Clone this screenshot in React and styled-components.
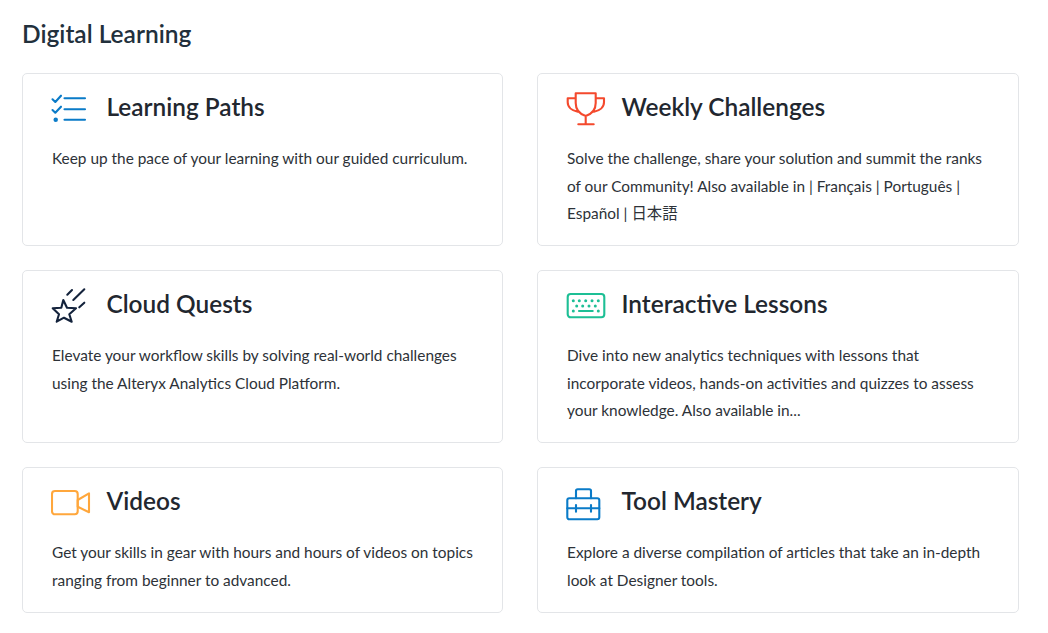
import React from 'react';
import styled, { createGlobalStyle } from 'styled-components';

const GlobalStyle = createGlobalStyle`
  html, body {
    margin: 0;
    padding: 0;
    background: #fff;
  }
  body {
    font-family: Lato, "Noto Sans CJK JP", sans-serif;
  }
`;

const Page = styled.main`
  padding: 16px 29px 20px 22px;
`;

const Heading = styled.h2`
  margin: 0 0 22px;
  font-size: 24.5px;
  line-height: 35px;
  font-weight: 600;
  color: #22303c;
`;

const Grid = styled.div`
  display: grid;
  grid-template-columns: 481px 482px;
  column-gap: 34px;
  row-gap: 24px;
`;

const Card = styled.article`
  border: 1px solid #e3e5e8;
  border-radius: 5px;
  padding: 15px 29px 17.5px;
`;

const CardHead = styled.div`
  display: flex;
  align-items: flex-start;
  gap: 15.5px;
  height: 40px;
  margin: 0 0 16px -1px;
`;

const IconSvg = styled.svg`
  width: 40px;
  height: 40px;
  flex: none;
  fill: none;
  stroke: ${p => p.$color};
  stroke-width: 2.1;
  stroke-linecap: round;
  stroke-linejoin: round;
`;

const KeyDot = styled.circle`
  fill: ${p => p.$color};
  stroke: none;
`;

const Title = styled.h3`
  margin: 0;
  font-size: 24.4px;
  line-height: 36px;
  font-weight: 600;
  color: #22272f;
`;

const Text = styled.p`
  margin: 0;
  font-size: 15.4px;
  line-height: 27.5px;
  color: #2d3238;
`;

const PathsIcon = () => (
  <IconSvg $color="#0a7bc8" viewBox="0 0 40 40">
    <path d="M1.500 10.300 4.300 13l5.700-6.300M1.500 21l2.800 2.700 5.700-6M13.500 9.300h20.500M13.500 20.300h20.500M13.500 30.700h20.500" />
    <circle cx="4.700" cy="30.700" r="1.200" />
  </IconSvg>
);

const TrophyIcon = () => (
  <IconSvg $color="#f4492d" viewBox="0 0 40 40">
    <path d="M9.700 4.200h20V14c0 6.500-4 11-10 13-6-2-10-6.500-10-13zM9.700 9.300H1.700v4c0 5 4.500 8.500 10 9.500M29.700 9.300h8.300v4c0 5-4.500 8.500-10 9.500M19.700 27v8.300M12.300 35.300h15.400" />
  </IconSvg>
);

const QuestsIcon = () => (
  <IconSvg $color="#14233c" viewBox="0 0 40 40">
    <path d="M12.300 14l3.700 7.700 9 .6-6.700 6 2.400 7.400-7.700-4-7.300 4 2.300-7.400-6.300-6 8.600-.6zM16.300 8.700 21 4M22.300 14 33.300 3.300M28.300 21.300l5-4.600" />
  </IconSvg>
);

const keyDots = [
  [7.3, 14.7], [13.3, 14.7], [19.7, 14.7], [26, 14.7], [32.3, 14.7],
  [10.7, 20], [16.7, 20], [23, 20], [29.3, 20],
  [7.3, 25], [32.3, 25],
];

const LessonsIcon = () => (
  <IconSvg $color="#1dbf95" viewBox="0 0 40 40">
    <rect x="1.700" y="8" width="36.600" height="23.300" rx="3" />
    {keyDots.map(([x, y]) => (
      <KeyDot key={`${x}-${y}`} $color="#1dbf95" cx={x} cy={y} r="1.500" />
    ))}
    <path d="M13 25h13.700" />
  </IconSvg>
);

const VideoIcon = () => (
  <IconSvg $color="#ffa73c" viewBox="0 0 40 40">
    <rect x="1" y="8" width="25.700" height="23.300" rx="3" />
    <path d="M26.700 17 38 10.300v19l-11.300-5.600z" />
  </IconSvg>
);

const ToolIcon = () => (
  <IconSvg $color="#0a7bc8" viewBox="0 0 40 40">
    <rect x="1.300" y="15.300" width="32" height="21" rx="2" />
    <path d="M10 15.300V8a1.700 1.700 0 0 1 1.700-1.700h11.600a1.700 1.700 0 0 1 1.700 1.700v7.300M1.300 25.300h32M10 22v6.700M25 22v6.700" />
  </IconSvg>
);

const cards = [
  {
    title: 'Learning Paths',
    icon: <PathsIcon />,
    text: 'Keep up the pace of your learning with our guided curriculum.',
  },
  {
    title: 'Weekly Challenges',
    icon: <TrophyIcon />,
    text: 'Solve the challenge, share your solution and summit the ranks of our Community! Also available in | Français | Português | Español | 日本語',
  },
  {
    title: 'Cloud Quests',
    icon: <QuestsIcon />,
    text: 'Elevate your workflow skills by solving real-world challenges using the Alteryx Analytics Cloud Platform.',
  },
  {
    title: 'Interactive Lessons',
    icon: <LessonsIcon />,
    text: 'Dive into new analytics techniques with lessons that incorporate videos, hands-on activities and quizzes to assess your knowledge. Also available in...',
  },
  {
    title: 'Videos',
    icon: <VideoIcon />,
    text: 'Get your skills in gear with hours and hours of videos on topics ranging from beginner to advanced.',
  },
  {
    title: 'Tool Mastery',
    icon: <ToolIcon />,
    text: 'Explore a diverse compilation of articles that take an in-depth look at Designer tools.',
  },
];

export default function App() {
  return (
    <Page>
      <GlobalStyle />
      <Heading>Digital Learning</Heading>
      <Grid>
        {cards.map(card => (
          <Card key={card.title}>
            <CardHead>
              {card.icon}
              <Title>{card.title}</Title>
            </CardHead>
            <Text>{card.text}</Text>
          </Card>
        ))}
      </Grid>
    </Page>
  );
}
